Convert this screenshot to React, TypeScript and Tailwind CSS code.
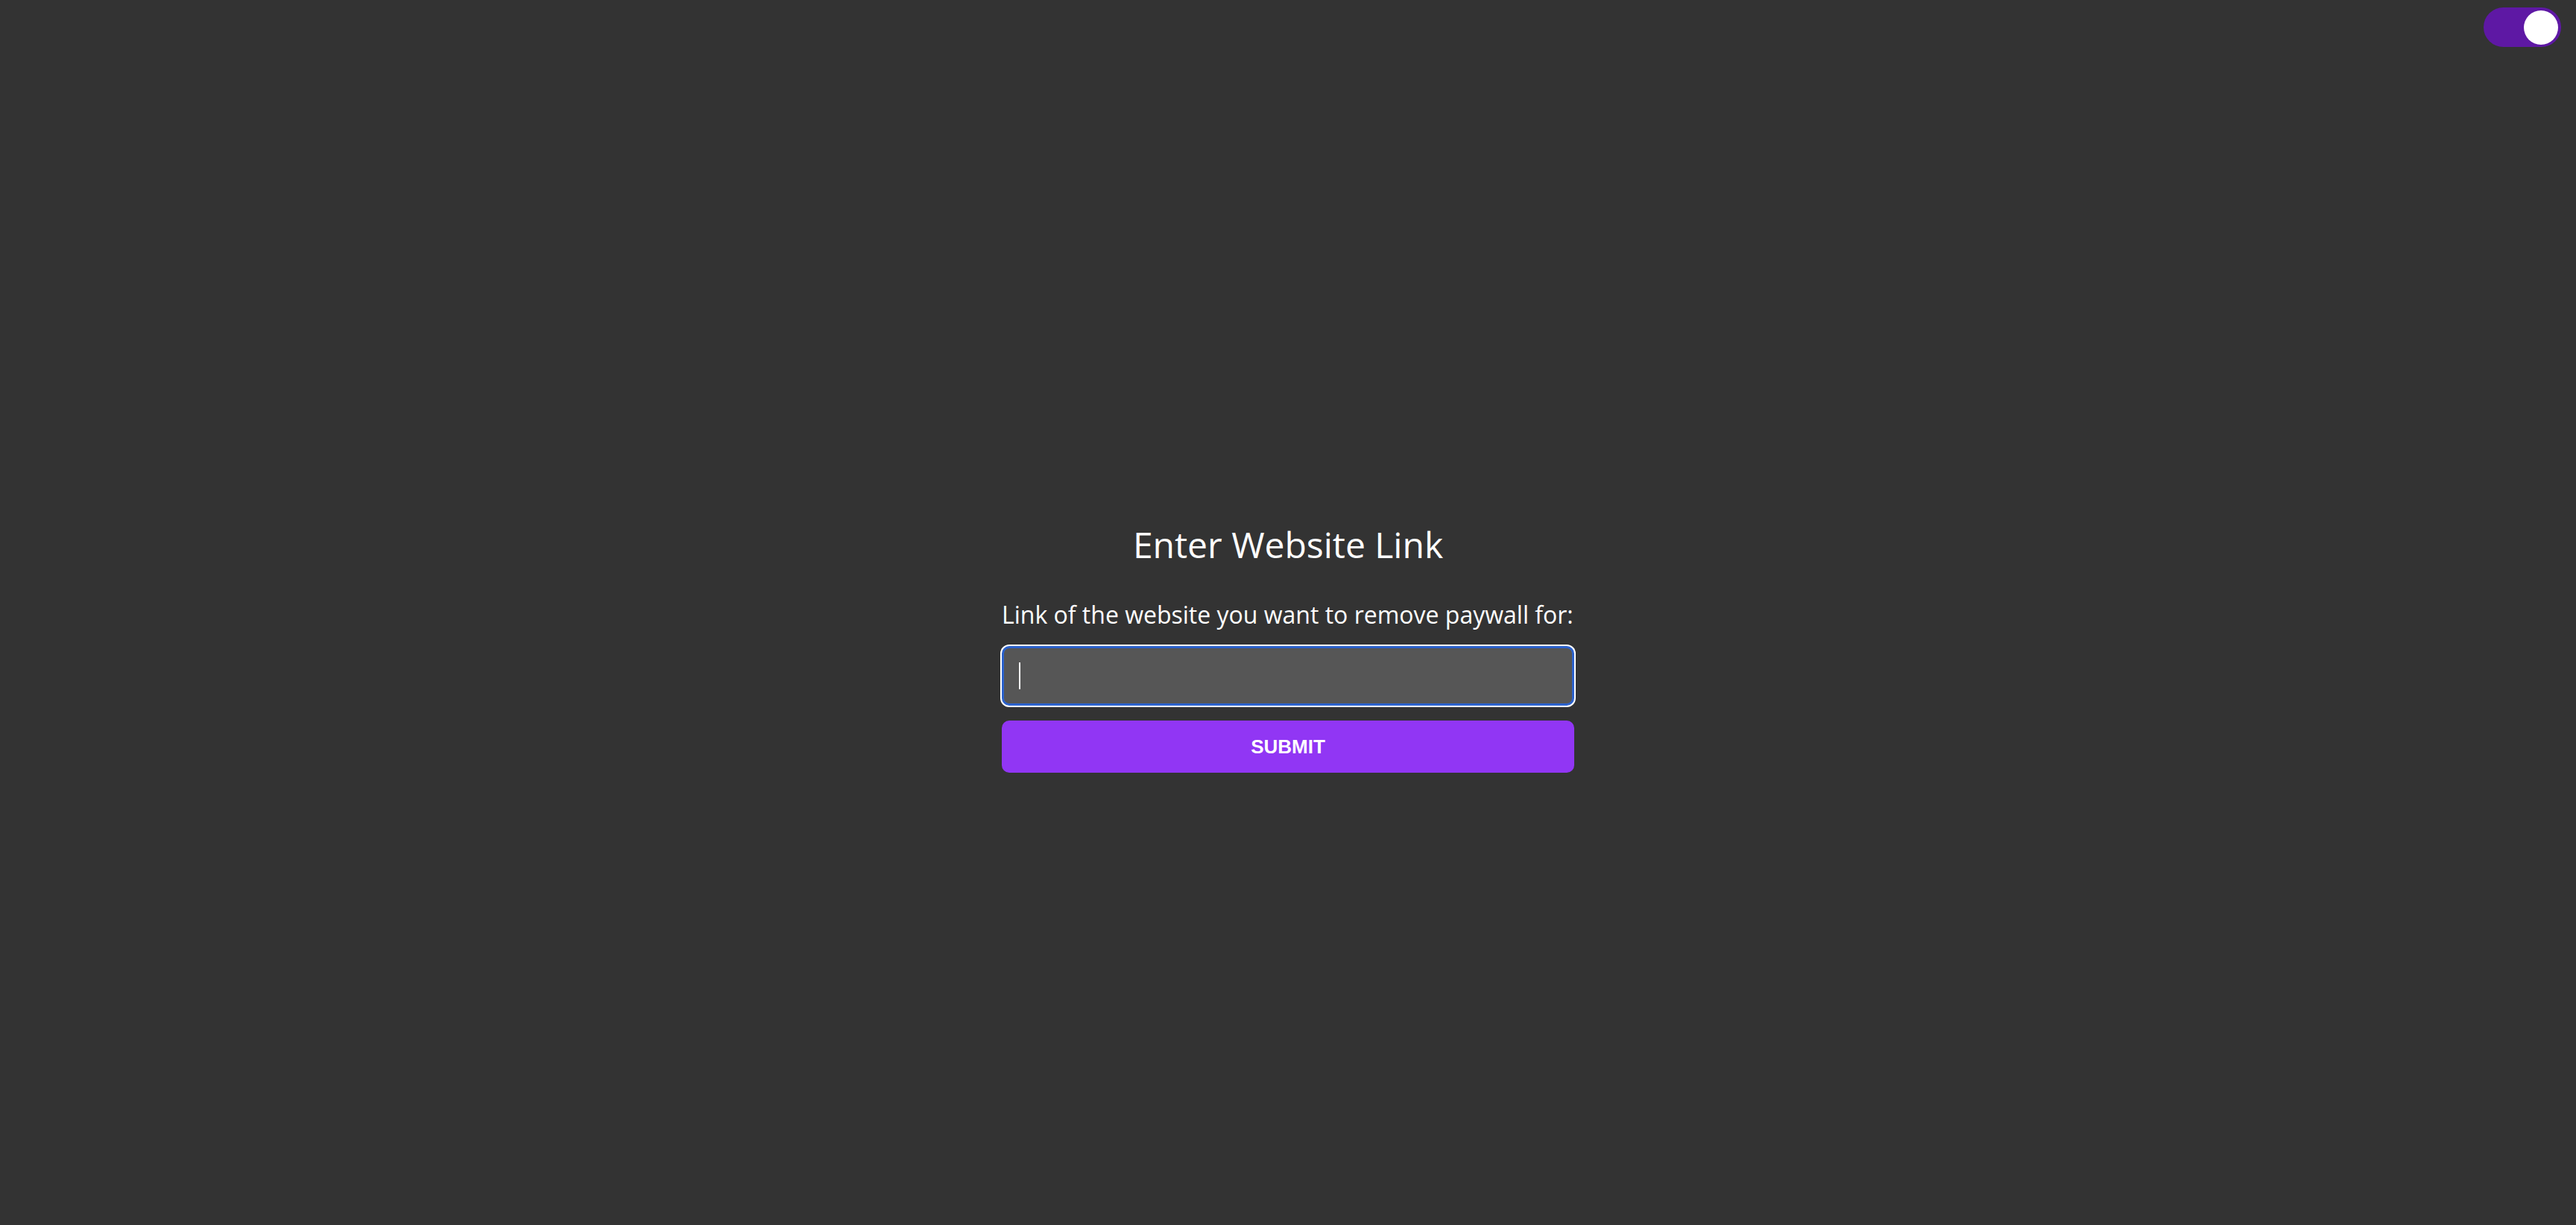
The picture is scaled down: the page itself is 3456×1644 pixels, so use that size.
import { useState } from 'react'

const ThemeToggle = ({ on, onToggle }: { on: boolean; onToggle: () => void }) => (
  <button
    onClick={onToggle}
    aria-label="Toggle theme"
    aria-pressed={on}
    className={[
      'flex h-[53px] w-[104px] items-center rounded-full px-[4px] transition-colors',
      on ? 'justify-end bg-[#5e18a4]' : 'justify-start bg-[#777777]',
    ].join(' ')}
  >
    <span className="block h-[46px] w-[46px] rounded-full bg-white" />
  </button>
)

export default function App() {
  const [dark, setDark] = useState(true)
  const [url, setUrl] = useState('')

  return (
    <div className="min-h-screen bg-[#333333] font-['Open_Sans','Noto_Sans',sans-serif] text-white">
      <header className="flex justify-end pt-[10px] pr-[20px]">
        <ThemeToggle on={dark} onToggle={() => setDark((prev) => !prev)} />
      </header>

      <main className="flex flex-col items-center pt-[635px]">
        <h1 className="text-[48px] leading-[65px] font-normal">Enter Website Link</h1>

        <form
          className="mt-[40px] flex w-[768px] flex-col gap-5"
          onSubmit={(e) => e.preventDefault()}
        >
          <label htmlFor="url" className="text-[32px] leading-[44px]">
            Link of the website you want to remove paywall for:
          </label>

          <div className="relative">
            <input
              id="url"
              type="text"
              value={url}
              onChange={(e) => setUrl(e.target.value)}
              className="block h-[80px] w-full rounded-[10px] border-[3px] border-[#2c62cc] bg-[#565656] px-[20px] text-[32px] text-white caret-white outline-none ring-2 ring-white"
            />
            {url === '' && (
              <span className="pointer-events-none absolute top-[22px] left-[23px] h-[36px] w-[2px] bg-white" />
            )}
          </div>

          <button
            type="submit"
            className="h-[70px] w-full rounded-[10px] bg-[#9136f4] font-['Liberation_Sans',Arial,sans-serif] text-[26px] font-bold text-white uppercase"
          >
            Submit
          </button>
        </form>
      </main>
    </div>
  )
}
